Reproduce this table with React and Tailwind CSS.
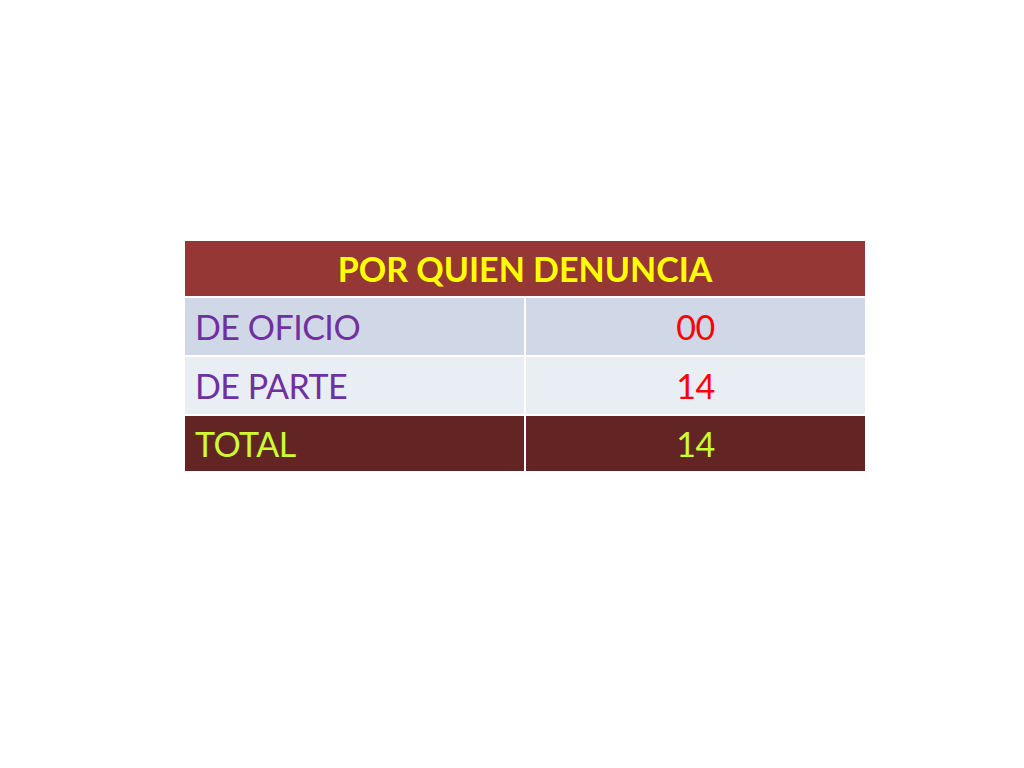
export default function App() {
  const font = { fontFamily: 'Lato, "Open Sans", sans-serif' };
  return (
    <div className="w-[1024px] h-[768px] bg-white pt-[241px] pl-[185px]" style={font}>
      <div className="w-[680px] flex flex-col gap-[2px]">
        <div className="h-[55px] bg-[#953735] flex items-center justify-center text-[#ffff00] font-bold text-[34px]">
          POR QUIEN DENUNCIA
        </div>
        <div className="h-[57px] flex gap-[2px] bg-white">
          <div className="w-[339px] bg-[#d0d8e8] flex items-center pl-[10px] text-[#7030a0] text-[34px] tracking-[-0.5px]">DE OFICIO</div>
          <div className="flex-1 bg-[#d0d8e8] flex items-center justify-center text-[#ff0000] text-[34px] tracking-[-0.5px]">00</div>
        </div>
        <div className="h-[57px] flex gap-[2px] bg-white">
          <div className="w-[339px] bg-[#e9edf4] flex items-center pl-[10px] text-[#7030a0] text-[34px] tracking-[-0.5px]">DE PARTE</div>
          <div className="flex-1 bg-[#e9edf4] flex items-center justify-center text-[#ff0000] text-[34px] tracking-[-0.5px]">14</div>
        </div>
        <div className="h-[55px] flex gap-[2px] bg-white">
          <div className="w-[339px] bg-[#632523] flex items-center pl-[10px] text-[#ccff33] text-[34px] tracking-[-0.5px]">TOTAL</div>
          <div className="flex-1 bg-[#632523] flex items-center justify-center text-[#ccff33] text-[34px] tracking-[-0.5px]">14</div>
        </div>
      </div>
    </div>
  );
}
